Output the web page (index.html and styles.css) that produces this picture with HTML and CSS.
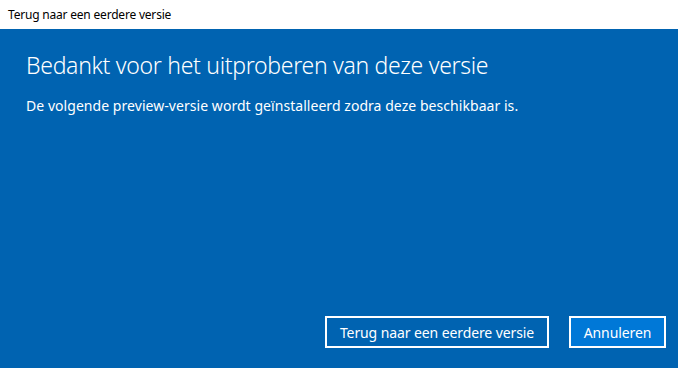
FILE: index.html
```html
<!DOCTYPE html>
<html lang="nl">
<head>
<meta charset="utf-8">
<title>Terug naar een eerdere versie</title>
<link rel="stylesheet" href="styles.css">
</head>
<body>
<div class="window">
  <div class="titlebar">Terug naar een eerdere versie</div>
  <div class="content">
    <div class="text">
      <h1 class="heading">Bedankt voor het uitproberen van deze versie</h1>
      <p class="sub">De volgende preview-versie wordt geïnstalleerd zodra deze beschikbaar is.</p>
    </div>
    <div class="actions">
      <button class="btn btn-secondary">Terug naar een eerdere versie</button>
      <button class="btn btn-primary">Annuleren</button>
    </div>
  </div>
</div>
</body>
</html>
```

FILE: styles.css
```css
html, body {
  margin: 0;
  padding: 0;
  width: 678px;
  height: 368px;
  overflow: hidden;
  font-family: "Noto Sans", "Open Sans", sans-serif;
}
.window {
  display: flex;
  flex-direction: column;
  width: 678px;
  height: 368px;
}
.titlebar {
  height: 29px;
  box-sizing: border-box;
  background: #ffffff;
  color: #000000;
  font-size: 12px;
  line-height: 29px;
  padding-left: 8px;
  letter-spacing: -0.2px;
}
.content {
  flex: 1;
  background: #0063b1;
  color: #ffffff;
  display: flex;
  flex-direction: column;
  justify-content: space-between;
  padding: 0 12px 20px 26px;
}
.heading {
  margin: 20px 0 0 0;
  font-weight: 300;
  font-size: 23px;
  line-height: 32px;
  letter-spacing: -0.3px;
}
.sub {
  margin: 15px 0 0 0;
  font-size: 14px;
  line-height: 20px;
  letter-spacing: 0.05px;
}
.actions {
  display: flex;
  justify-content: flex-end;
  gap: 20px;
}
.btn {
  height: 32px;
  box-sizing: border-box;
  border: 2px solid #ffffff;
  color: #ffffff;
  font-family: inherit;
  font-size: 14px;
  letter-spacing: -0.1px;
  padding: 0 8px;
  white-space: nowrap;
}
.btn-secondary {
  background: #0063b1;
  width: 224px;
}
.btn-primary {
  background: #0078d7;
  width: 97px;
}
```
